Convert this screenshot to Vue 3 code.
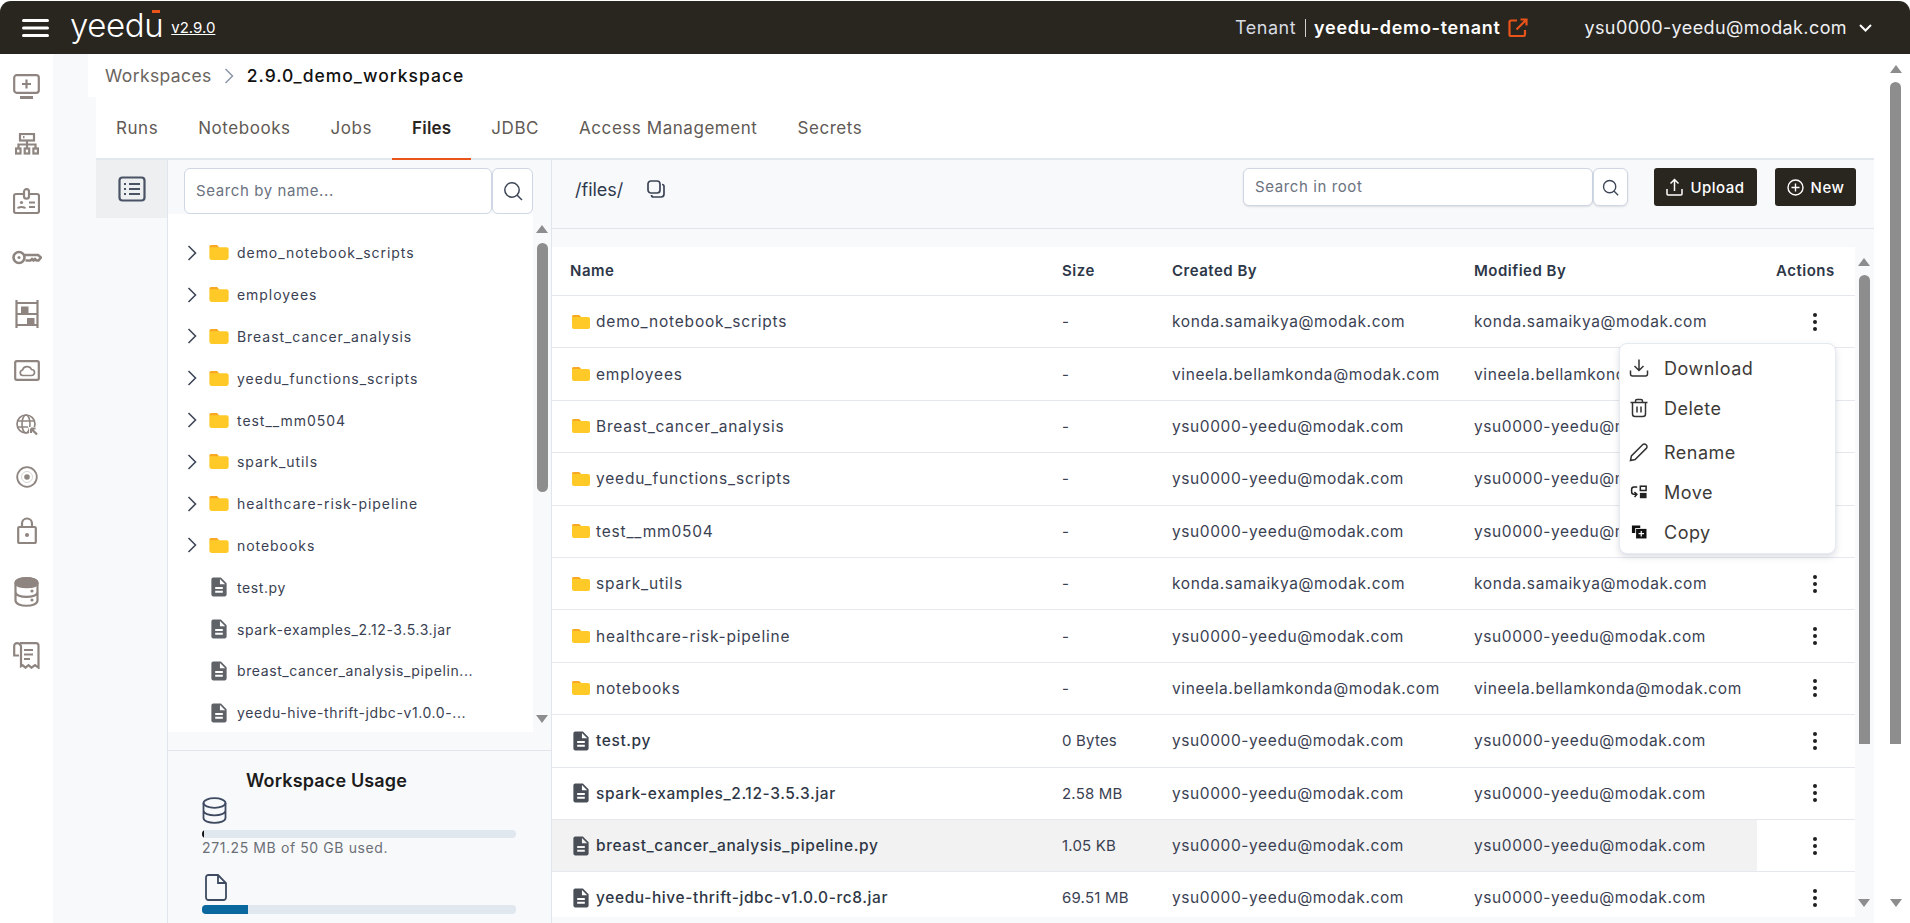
<script setup>
const sideIcons = [
  { h: 58, w: 27, vb: '0 0 27 25', body: '<rect x="1.2" y="1.2" width="24.6" height="17.6" rx="2.5"/><path d="M7 23.5h13" stroke-width="3"/><path d="M13.5 5.5v9M9 10h9"/>' },
  { h: 57, w: 24, vb: '0 0 24 22', body: '<rect x="5" y="1" width="14" height="6.5"/><path d="M8 4.2h1.5M12 7.5v4M3.5 15v-3.5h17V15M12 11.5V15"/><rect x="1" y="15.5" width="4.5" height="5"/><rect x="9.7" y="15.5" width="4.5" height="5"/><rect x="18.4" y="15.5" width="4.5" height="5"/>' },
  { h: 57, w: 27, vb: '0 0 27 26', body: '<path d="M10 6H3a2 2 0 00-2 2v15a2 2 0 002 2h21a2 2 0 002-2V8a2 2 0 00-2-2h-7"/><rect x="11" y="1.2" width="5" height="9.5" rx="2.5"/><circle cx="8.5" cy="14.5" r="1.6" fill="#8f8580" stroke="none"/><path d="M5 20.5c.5-2 6.5-2 7 0M16 14.5h6M16 19h6"/>' },
  { h: 56, w: 30, vb: '0 0 30 15', body: '<circle cx="7" cy="7.5" r="5.5" stroke-width="2.6"/><circle cx="7" cy="7.5" r="1.5" fill="#8f8580" stroke="none"/><path d="M12.5 5h13.5l3 2.5-2.5 3h-2l-1.5-1.5-1.5 1.5-1.5-1.5-1.5 1.5h-5" stroke-width="2.6"/>' },
  { h: 57, w: 24, vb: '0 0 24 28', body: '<path d="M1.5 0v28M22.5 0v28M1.5 3h21M1.5 14h21M1.5 25h21"/><rect x="6" y="6.5" width="7.5" height="7.5" fill="#8f8580" stroke="none"/><rect x="12" y="18" width="7.5" height="7" fill="#8f8580" stroke="none"/>' },
  { h: 56, w: 26, vb: '0 0 26 21', body: '<rect x="1.2" y="1.2" width="23.6" height="18.6" rx="1.5"/><path d="M8.5 15.5a2.8 2.8 0 010-5.5 4.8 4.8 0 019-.5 3 3 0 010 6z" stroke-width="1.7"/>' },
  { h: 53, w: 22, vb: '0 0 22 22', body: '<circle cx="10" cy="10" r="9" stroke-width="1.7"/><ellipse cx="10" cy="10" rx="4" ry="9" stroke-width="1.6"/><path d="M1 7h18M1 13h11" stroke-width="1.6"/><path d="M13 13l8 0 0 8-8 0z" fill="#fff" stroke="none"/><path d="M15 14.5h4.5M15 14.5V19M15.5 15l5.5 5.5" stroke-width="2.2"/>' },
  { h: 51, w: 22, vb: '0 0 22 22', body: '<circle cx="11" cy="11" r="9.8" stroke-width="1.8"/><circle cx="11" cy="11" r="2.8" fill="#8f8580" stroke="none"/><circle cx="11" cy="11" r="5.5" stroke-width="1" stroke="#d8d4d1"/>' },
  { h: 56, w: 20, vb: '0 0 20 27', body: '<rect x="1.2" y="10" width="17.6" height="16" rx="1"/><path d="M5 10V6.5a5 5 0 0110 0V10"/><circle cx="10" cy="18" r="2" fill="#8f8580" stroke="none"/>' },
  { h: 67, w: 25, vb: '0 0 25 30', body: '<path d="M1.5 6.5c0-7 22-7 22 0v17c0 7-22 7-22 0zM1.5 15c0 6.5 22 6.5 22 0"/><path d="M1.5 6c0-6.5 22-6.5 22 0 0 5.5-22 5.5-22 0z" fill="#8f8580"/><circle cx="18" cy="14" r="1.6" fill="#8f8580" stroke="none"/><circle cx="18" cy="23" r="1.6" fill="#8f8580" stroke="none"/>' },
  { h: 60, w: 27, vb: '0 0 27 27', body: '<path d="M7 1.2h16a2.5 2.5 0 012.5 2.5v22l-3.5-2.5-3.5 2.5-3-2.5-3 2.5-3-2.5-1.5 1V4C7 2 5.5 1.2 4 1.2 2.3 1.2 1.2 2.5 1.2 4v9.5H6"/><path d="M11 8h9M11 12.5h9M11 17h6"/>' },
]

const treeItems = [
  { name: 'demo_notebook_scripts', folder: true },
  { name: 'employees', folder: true },
  { name: 'Breast_cancer_analysis', folder: true },
  { name: 'yeedu_functions_scripts', folder: true },
  { name: 'test__mm0504', folder: true },
  { name: 'spark_utils', folder: true },
  { name: 'healthcare-risk-pipeline', folder: true },
  { name: 'notebooks', folder: true },
  { name: 'test.py' },
  { name: 'spark-examples_2.12-3.5.3.jar' },
  { name: 'breast_cancer_analysis_pipelin...' },
  { name: 'yeedu-hive-thrift-jdbc-v1.0.0-...' },
]

const konda = 'konda.samaikya@modak.com'
const vineela = 'vineela.bellamkonda@modak.com'
const ysu = 'ysu0000-yeedu@modak.com'

const rows = [
  { name: 'demo_notebook_scripts', size: '-', by: konda, folder: true },
  { name: 'employees', size: '-', by: vineela, folder: true },
  { name: 'Breast_cancer_analysis', size: '-', by: ysu, folder: true },
  { name: 'yeedu_functions_scripts', size: '-', by: ysu, folder: true },
  { name: 'test__mm0504', size: '-', by: ysu, folder: true },
  { name: 'spark_utils', size: '-', by: konda, folder: true },
  { name: 'healthcare-risk-pipeline', size: '-', by: ysu, folder: true },
  { name: 'notebooks', size: '-', by: vineela, folder: true },
  { name: 'test.py', size: '0 Bytes', by: ysu },
  { name: 'spark-examples_2.12-3.5.3.jar', size: '2.58 MB', by: ysu },
  { name: 'breast_cancer_analysis_pipeline.py', size: '1.05 KB', by: ysu, hl: true },
  { name: 'yeedu-hive-thrift-jdbc-v1.0.0-rc8.jar', size: '69.51 MB', by: ysu },
]

const tabs = ['Runs', 'Notebooks', 'Jobs', 'Files', 'JDBC', 'Access Management', 'Secrets']
const folderPath = 'M2 0h5l2 2h7a2 2 0 012 2v8a2 2 0 01-2 2H2a2 2 0 01-2-2V2a2 2 0 012-2z'
const docPath = 'M14 2H6c-1.1 0-2 .9-2 2v16c0 1.1.89 2 1.99 2H18c1.1 0 2-.9 2-2V8l-6-6zm2 16H8v-2h8v2zm0-4H8v-2h8v2zm-3-5V3.5L18.5 9H13z'
</script>

<template>
  <div class="app">
    <header class="topbar">
      <div class="brand">
        <svg class="burger" width="27" height="18" viewBox="0 0 27 18">
          <path d="M1.5 1.5h24M1.5 9h24M1.5 16.5h24" stroke="#fff" stroke-width="3" stroke-linecap="round" />
        </svg>
        <span class="logo">yeedu<i class="logo-bar"></i></span>
        <a class="version">v2.9.0</a>
      </div>
      <div class="top-right">
        <span class="tenant-label">Tenant</span>
        <span class="tenant-name">yeedu-demo-tenant</span>
        <svg class="ext" width="20" height="20" viewBox="0 0 20 20" fill="none" stroke="#e8541a" stroke-width="2.2">
          <path d="M9 2.5H3A1.5 1.5 0 001.5 4v12.5A1.5 1.5 0 003 18h12.5a1.5 1.5 0 001.5-1.5V12" />
          <path d="M8.5 11.5L18 2M12.5 1.5H18.5V7.5" />
        </svg>
        <span class="user">ysu0000-yeedu@modak.com</span>
        <svg width="13" height="8" viewBox="0 0 13 8" fill="none" stroke="#fff" stroke-width="2">
          <path d="M1 1l5.5 5.5L12 1" />
        </svg>
      </div>
    </header>

    <div class="body">
      <nav class="side">
        <div v-for="(ic, i) in sideIcons" :key="i" class="side-item" :style="{ height: ic.h + 'px' }">
          <svg :width="ic.w" :viewBox="ic.vb" v-html="ic.body"></svg>
        </div>
      </nav>

      <main class="content">
        <div class="crumb">
          <span class="crumb-link">Workspaces</span>
          <svg width="10" height="16" viewBox="0 0 10 16" fill="none" stroke="#8d97a8" stroke-width="1.5">
            <path d="M1.5 1l7 7-7 7" />
          </svg>
          <span class="crumb-cur">2.9.0_demo_workspace</span>
        </div>

        <div class="tabs">
          <span v-for="t in tabs" :key="t" class="tab" :class="{ active: t === 'Files' }">{{ t }}</span>
        </div>

        <div class="work">
          <div class="rail">
            <div class="rail-btn">
              <svg width="28" height="26" viewBox="0 0 28 26" fill="none" stroke="#4a5366" stroke-width="2.2">
                <rect x="1.5" y="1.5" width="25" height="23" rx="3" />
                <path d="M11 8h11M11 13h11M11 18h11" />
                <path d="M6 8h2M6 13h2M6 18h2" />
              </svg>
            </div>
          </div>

          <aside class="tree-col">
            <div class="tree-search">
              <input class="input" placeholder="Search by name..." />
              <button class="input-btn">
                <svg width="20" height="20" viewBox="0 0 20 20" fill="none" stroke="#3d4656" stroke-width="1.5">
                  <circle cx="9" cy="9" r="7.2" />
                  <path d="M14 14l5 5" />
                </svg>
              </button>
            </div>
            <div class="tree-box">
              <div class="tree">
                <div v-for="item in treeItems" :key="item.name" class="tree-row">
                  <svg v-if="item.folder" class="chev" width="10" height="16" viewBox="0 0 10 16" fill="none" stroke="#3f4858" stroke-width="1.6">
                    <path d="M1.5 1l7 7-7 7" />
                  </svg>
                  <span v-else class="chev"></span>
                  <svg v-if="item.folder" class="tree-ic" width="20" height="15" viewBox="0 0 18 14">
                    <path :d="folderPath" fill="#ffca28" />
                    <path d="M2 0h5l2 2H0a2 2 0 012-2z" fill="#f9a825" />
                  </svg>
                  <svg v-else class="tree-ic doc" width="20" height="20" viewBox="3 1.5 18 21">
                    <path :d="docPath" fill="#5f6368" />
                  </svg>
                  <span class="tree-name" :class="{ folder: item.folder }">{{ item.name }}</span>
                </div>
              </div>
              <div class="sb tree-sb">
                <i class="arr up"></i>
                <i class="thumb tree-thumb"></i>
                <i class="arr down"></i>
              </div>
            </div>

            <div class="usage">
              <h3 class="usage-title">Workspace Usage</h3>
              <svg class="usage-ic" width="25" height="27" viewBox="0 0 25 27" fill="none" stroke="#3d4a60" stroke-width="1.8">
                <ellipse cx="12.5" cy="6" rx="11" ry="4.8" />
                <path d="M1.5 6v15c0 6.5 22 6.5 22 0V6M1.5 13.5c0 6.5 22 6.5 22 0" />
              </svg>
              <div class="bar"><div class="bar-fill dark" :style="{ width: '2px' }"></div></div>
              <p class="usage-text">271.25 MB of 50 GB used.</p>
              <svg class="usage-ic file" width="22" height="27" viewBox="0 0 22 27" fill="none" stroke="#3d4a60" stroke-width="1.8">
                <path d="M3.5 1H13l8 8v14.5a2.5 2.5 0 01-2.5 2.5h-15A2.5 2.5 0 011 23.5v-20A2.5 2.5 0 013.5 1zM13 1v8h8" />
              </svg>
              <div class="bar tall"><div class="bar-fill blue" :style="{ width: '46px' }"></div></div>
            </div>
          </aside>

          <section class="files-col">
            <div class="toolbar">
              <span class="path">/files/</span>
              <svg class="copy" width="18" height="18" viewBox="0 0 18 18" fill="none" stroke="#3d4656" stroke-width="1.7">
                <rect x="1" y="1" width="12" height="12" rx="3" />
                <path d="M15 4.5a2 2 0 012 2V14a3 3 0 01-3 3H6.5a2 2 0 01-2-2" />
              </svg>
              <div class="root-search">
                <input class="input" placeholder="Search in root" />
                <button class="input-btn">
                  <svg width="17" height="17" viewBox="0 0 20 20" fill="none" stroke="#3d4656" stroke-width="1.6">
                    <circle cx="9" cy="9" r="7.2" />
                    <path d="M14 14l5 5" />
                  </svg>
                </button>
              </div>
              <button class="btn upload">
                <svg width="17" height="18" viewBox="0 0 17 18" fill="none" stroke="#fff" stroke-width="1.5">
                  <path d="M8.5 13V2M4.5 5.5l4-4 4 4M1 11v5a1 1 0 001 1h13a1 1 0 001-1v-5" />
                </svg>
                Upload
              </button>
              <button class="btn new">
                <svg width="17" height="17" viewBox="0 0 17 17" fill="none" stroke="#fff" stroke-width="1.4">
                  <circle cx="8.5" cy="8.5" r="7.5" />
                  <path d="M8.5 4.5v8M4.5 8.5h8" />
                </svg>
                New
              </button>
            </div>

            <div class="table-area">
              <div class="table">
                <div class="row head">
                  <span>Name</span><span>Size</span><span>Created By</span><span>Modified By</span><span>Actions</span>
                </div>
                <div v-for="r in rows" :key="r.name" class="row" :class="{ hl: r.hl }">
                  <span class="name" :class="{ isfile: !r.folder }">
                    <svg v-if="r.folder" width="18" height="14" viewBox="0 0 18 14">
                      <path :d="folderPath" fill="#ffca28" />
                      <path d="M2 0h5l2 2H0a2 2 0 012-2z" fill="#f9a825" />
                    </svg>
                    <svg v-else width="18" height="20" viewBox="3 1.5 18 21">
                      <path :d="docPath" fill="#4a4f57" />
                    </svg>
                    {{ r.name }}
                  </span>
                  <span class="size">{{ r.size }}</span>
                  <span>{{ r.by }}</span>
                  <span>{{ r.by }}</span>
                  <span class="kebab">
                    <svg width="6" height="20" viewBox="0 0 6 20" fill="#1f1f1f">
                      <circle cx="3" cy="3" r="2" /><circle cx="3" cy="10" r="2" /><circle cx="3" cy="17" r="2" />
                    </svg>
                  </span>
                </div>

                <div class="menu">
                  <div class="menu-item">
                    <svg width="20" height="20" viewBox="0 0 20 20" fill="none" stroke="#333" stroke-width="1.5">
                      <path d="M10 1.5V12M5.5 8l4.5 4.5L14.5 8M1.5 12.5V16a2 2 0 002 2h13a2 2 0 002-2v-3.5" />
                    </svg>
                    Download
                  </div>
                  <div class="menu-item">
                    <svg width="20" height="20" viewBox="0 0 20 20" fill="none" stroke="#333" stroke-width="1.5">
                      <path d="M1.5 4.5h17M6.5 4.5V3A1.5 1.5 0 018 1.5h4A1.5 1.5 0 0113.5 3v1.5M3.5 4.5V16A2.5 2.5 0 006 18.5h8a2.5 2.5 0 002.5-2.5V4.5M8 8.5v6M12 8.5v6" />
                    </svg>
                    Delete
                  </div>
                  <div class="menu-item gap">
                    <svg width="20" height="20" viewBox="0 0 20 20" fill="none" stroke="#333" stroke-width="1.5">
                      <path d="M1.5 18.5l.9-4.6L13.6 2.7a2.4 2.4 0 013.4 0l.3.3a2.4 2.4 0 010 3.4L6.1 17.6z" />
                    </svg>
                    Rename
                  </div>
                  <div class="menu-item">
                    <svg width="20" height="16" viewBox="-1 -1 22 18" fill="none" stroke="#222" stroke-width="1.7">
                      <path d="M8 2.5H4.5a2.8 2.8 0 00-2.8 2.8v2.4a2.8 2.8 0 002.8 2.8H7M4.8 8l2.8 2.6L5 13.5" />
                      <rect x="11.5" y="1.5" width="6.5" height="4.8" />
                      <rect x="11" y="9" width="7.5" height="6" fill="#222" stroke="none" />
                    </svg>
                    Move
                  </div>
                  <div class="menu-item">
                    <svg width="20" height="18" viewBox="-2.5 -2 24 21.5">
                      <path d="M1 1h10v3H5v6H1z" fill="#111" />
                      <path d="M6 5h12.5v11.5H6z" fill="#111" />
                      <path d="M12.2 7.5v6.5M9 10.8h6.5" stroke="#fff" stroke-width="1.5" />
                    </svg>
                    Copy
                  </div>
                </div>
              </div>
              <div class="sb table-sb">
                <i class="arr up"></i>
                <i class="thumb inner-thumb"></i>
                <i class="arr down"></i>
              </div>
            </div>
          </section>
        </div>
      </main>

      <div class="sb page-sb">
        <i class="arr up"></i>
        <i class="thumb inner-thumb"></i>
        <i class="arr down"></i>
      </div>
    </div>
  </div>
</template>

<style>
html, body { margin: 0; background: #fff; }
</style>

<style scoped>
.app {
  width: 1910px;
  height: 923px;
  overflow: hidden;
  display: flex;
  flex-direction: column;
  font-family: Inter, "Liberation Sans", sans-serif;
  color: #3a4152;
}
button { font-family: inherit; cursor: pointer; }

/* top bar */
.topbar {
  height: 53px;
  margin-top: 1px;
  flex: none;
  background: #29251f;
  border-radius: 11px 11px 0 0;
  display: flex;
  align-items: center;
  justify-content: space-between;
  color: #fff;
}
.brand { display: flex; align-items: center; padding-left: 22px; }
.logo {
  position: relative;
  margin-left: 21px;
  font-size: 33px;
  font-weight: 300;
  letter-spacing: -0.4px;
  line-height: 1;
  margin-top: -4px;
}
.logo-bar {
  position: absolute;
  right: 3px;
  top: 1px;
  width: 8px;
  height: 2.5px;
  background: #e8541a;
}
.version { margin-left: 8px; font-size: 15px; text-decoration: underline; color: #fff; }
.top-right { display: flex; align-items: center; padding-right: 38px; font-size: 18px; }
.tenant-label { color: #d8dce2; padding-right: 9px; border-right: 1px solid #cfcfcf; line-height: 18px; letter-spacing: 0.5px; }
.tenant-name { font-weight: 600; margin-left: 8px; letter-spacing: 0.7px; }
.ext { margin-left: 8px; }
.user { margin-left: 56px; margin-right: 12px; letter-spacing: 0.4px; color: #eef0f3; }

/* layout */
.body { flex: 1; display: flex; min-height: 0; }
.side {
  width: 53px;
  flex: none;
  background: #fff;
  padding-top: 3px;
  display: flex;
  flex-direction: column;
  box-sizing: border-box;
  box-shadow: 1px 0 3px rgba(0, 0, 0, .04);
}
.side-item { display: flex; align-items: center; justify-content: center; flex: none; }
.side-item svg { fill: none; stroke: #8f8580; stroke-width: 2.2; }
.content {
  width: 1821px;
  flex: none;
  background: #f8f9fb;
  display: flex;
  flex-direction: column;
  min-height: 0;
}
.crumb {
  margin-left: 35px;
  height: 43px;
  flex: none;
  background: #fff;
  display: flex;
  align-items: center;
  padding-left: 17px;
  font-size: 17.5px;
}
.crumb-link { color: #6b6560; letter-spacing: 0.4px; }
.crumb svg { margin: 0 13px 0 12px; }
.crumb-cur { color: #111; font-weight: 500; letter-spacing: 1px; }
.tabs {
  margin-left: 43px;
  height: 63px;
  flex: none;
  background: #fff;
  display: flex;
  box-sizing: border-box;
  border-bottom: 2px solid #e3e7ee;
}
.tab {
  padding: 0 20px;
  height: 63px;
  box-sizing: border-box;
  display: flex;
  align-items: center;
  padding-bottom: 2px;
  font-size: 17px;
  letter-spacing: 0.55px;
  color: #5f5a55;
}
.tab.active {
  color: #29251f;
  font-weight: 600;
  letter-spacing: 0.2px;
  border-bottom: 2px solid #e8541a;
  padding-bottom: 0;
}
.work { margin-left: 43px; flex: 1; display: flex; min-height: 0; }

/* rail + tree */
.rail { width: 71px; flex: none; }
.rail-btn {
  height: 58px;
  background: #eeeff0;
  display: flex;
  align-items: center;
  justify-content: center;
}
.tree-col {
  width: 385px;
  flex: none;
  box-sizing: border-box;
  border-left: 1px solid #e1e5ec;
  border-right: 1px solid #e1e5ec;
  display: flex;
  flex-direction: column;
}
.tree-search { display: flex; padding: 8px 0 0 16px; height: 54px; box-sizing: border-box; }
.input {
  box-sizing: border-box;
  border: 1.5px solid #cfd6e4;
  border-radius: 6px;
  background: #fff;
  font-family: inherit;
  outline: none;
  padding: 0 11px 2px;
  font-size: 15px;
  color: #3a4152;
}
.input::placeholder { color: #6b7280; opacity: 1; }
.input-btn {
  box-sizing: border-box;
  border: 1.5px solid #cfd6e4;
  border-radius: 6px;
  background: #fff;
  display: flex;
  align-items: center;
  justify-content: center;
  padding: 0;
}
.tree-search .input { width: 308px; height: 46px; letter-spacing: 0.6px; }
.tree-search .input-btn { width: 41px; height: 46px; }
.tree-box { height: 518px; flex: none; display: flex; background: linear-gradient(to right, #fff 365px, transparent 365px); }
.tree { width: 365px; flex: none; padding-top: 18px; box-sizing: border-box; overflow: hidden; }
.tree-row { height: 41.8px; display: flex; align-items: center; font-size: 14px; }
.chev { width: 10px; margin-left: 19px; flex: none; }
.tree-ic { margin-left: 12px; flex: none; }
.tree-name { margin-left: 8px; white-space: nowrap; letter-spacing: 0.6px; }
.tree-name.folder { letter-spacing: 0.95px; }

/* fake scrollbars */
.sb { display: flex; flex-direction: column; align-items: center; flex: none; position: relative; }
.thumb { display: block; width: 11px; background: #8d8d8d; border-radius: 6px 6px 0 0; }
.arr { display: block; width: 0; height: 0; border-left: 6px solid transparent; border-right: 6px solid transparent; }
.arr.up { border-bottom: 8px solid #8d8d8d; }
.arr.down { border-top: 8px solid #8d8d8d; position: absolute; }
.tree-sb { width: 18px; padding-top: 11px; box-sizing: border-box; }
.tree-thumb { height: 249px; margin-top: 10px; border-radius: 6px; }
.tree-sb .down { top: 501px; }
.inner-thumb { height: 469px; margin-top: 9px; }
.table-sb { width: 18px; padding-top: 11px; box-sizing: border-box; }
.table-sb .down { top: 652px; }
.page-sb { width: 36px; padding-top: 11px; box-sizing: border-box; }
.page-sb .arr.up { margin-left: 7px; }
.page-sb .thumb { margin-left: 7px; height: 662px; }
.page-sb .down { top: 845px; margin-left: 7px; }

/* usage */
.usage { border-top: 1px solid #e1e5ec; margin-top: 18px; padding-left: 34px; }
.usage-title { margin: 19px 0 0 44px; font-size: 18px; line-height: 22px; font-weight: 600; letter-spacing: 0.15px; color: #1c1c1c; }
.usage-ic { display: block; margin-top: 5px; }
.usage-ic.file { margin: 16px 0 0 3px; }
.bar { width: 314px; height: 8px; background: #e1e7ef; border-radius: 4px; margin-top: 6px; overflow: hidden; }
.bar.tall { height: 9px; margin-top: 4px; }
.bar-fill { height: 100%; }
.bar-fill.dark { background: #111; }
.bar-fill.blue { background: #0b689f; }
.usage-text { margin: 0; font-size: 14px; line-height: 20px; color: #6b6f76; letter-spacing: 0.6px; }

/* file list */
.files-col { flex: 1; min-width: 0; display: flex; flex-direction: column; }
.toolbar {
  height: 69px;
  flex: none;
  box-sizing: border-box;
  border-bottom: 1px solid #e1e5ec;
  display: flex;
  align-items: flex-start;
  padding: 8px 18px 0 23px;
}
.path { font-size: 18px; line-height: 44px; width: 72px; color: #2f3a4d; }
.copy { margin-top: 12px; }
.root-search { display: flex; margin-left: 578px; }
.root-search .input { width: 350px; height: 38px; font-size: 15px; letter-spacing: 0.6px; box-shadow: 0 1px 2px rgba(60, 70, 90, .15); }
.root-search .input-btn { width: 35px; height: 38px; box-shadow: 0 1px 2px rgba(60, 70, 90, .15); }
.btn {
  height: 38px;
  border: 0;
  border-radius: 3px;
  background: #29251f;
  color: #fff;
  font-size: 15px;
  font-weight: 500;
  letter-spacing: 0.5px;
  display: flex;
  align-items: center;
  justify-content: center;
  gap: 7px;
  padding: 0;
}
.btn.upload { width: 103px; margin-left: 26px; }
.btn.new { width: 81px; margin-left: 18px; }
.table-area { display: flex; height: 670px; margin-top: 18px; flex: none; }
.table { width: 1303px; flex: none; background: #fff; position: relative; overflow: hidden; }
.row {
  display: grid;
  grid-template-columns: 492px 110px 302px 302px 79px;
  padding-left: 18px;
  height: 52.4px;
  box-sizing: border-box;
  align-items: center;
  border-bottom: 1px solid #e5e8ef;
  font-size: 15.5px;
  letter-spacing: 0.6px;
  white-space: nowrap;
}
.row.head { height: 49px; padding-bottom: 2px; font-size: 15px; letter-spacing: 0.5px; font-weight: 600; color: #2d3748; }
.row.hl { background: linear-gradient(to right, #f2f2f2 1205px, #fff 1205px); }
.name { display: flex; align-items: center; gap: 6px; padding-left: 2px; letter-spacing: 0.8px; }
.name.isfile { font-weight: 500; letter-spacing: 0.6px; color: #2f3746; }
.size { font-size: 15px; letter-spacing: 0.2px; }
.kebab { padding-left: 36px; display: flex; }

/* context menu */
.menu {
  position: absolute;
  left: 1067px;
  top: 96px;
  width: 217px;
  height: 211px;
  box-sizing: border-box;
  background: #fff;
  border: 1px solid #e5e9f2;
  border-radius: 8px;
  box-shadow: 0 3px 6px rgba(90, 100, 120, .22);
  padding-top: 4px;
}
.menu-item {
  height: 40px;
  display: flex;
  align-items: center;
  gap: 15px;
  padding-left: 9px;
  font-size: 18px;
  letter-spacing: 0.5px;
  color: #3d3a38;
}
.menu-item.gap { margin-top: 4px; }
</style>
